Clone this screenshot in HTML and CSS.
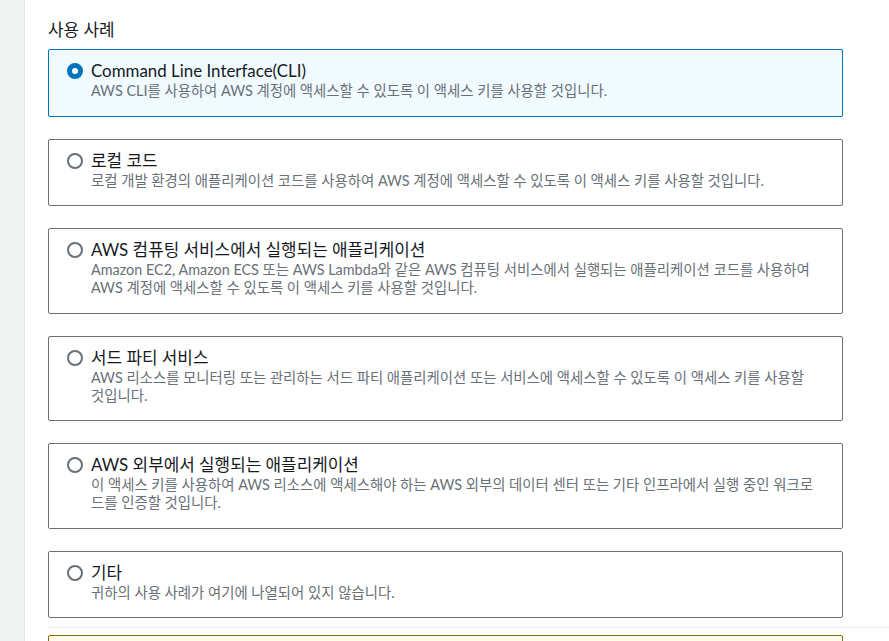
FILE: index.html
```html
<!DOCTYPE html>
<html lang="ko">
<head>
<meta charset="utf-8">
<title>사용 사례</title>
<link rel="stylesheet" href="styles.css">
</head>
<body>
<div class="layout">
  <aside class="rail"></aside>
  <main class="content">
    <h2 class="field-label">사용 사례</h2>
    <div class="tiles" role="radiogroup">
      <div class="tile is-checked" role="radio" aria-checked="true">
        <span class="radio"></span>
        <div class="tile-text">
          <div class="tile-title">Command Line Interface(CLI)</div>
          <div class="tile-desc">AWS CLI를 사용하여 AWS 계정에 액세스할 수 있도록 이 액세스 키를 사용할 것입니다.</div>
        </div>
      </div>
      <div class="tile" role="radio" aria-checked="false">
        <span class="radio"></span>
        <div class="tile-text">
          <div class="tile-title">로컬 코드</div>
          <div class="tile-desc">로컬 개발 환경의 애플리케이션 코드를 사용하여 AWS 계정에 액세스할 수 있도록 이 액세스 키를 사용할 것입니다.</div>
        </div>
      </div>
      <div class="tile" role="radio" aria-checked="false">
        <span class="radio"></span>
        <div class="tile-text">
          <div class="tile-title">AWS 컴퓨팅 서비스에서 실행되는 애플리케이션</div>
          <div class="tile-desc">Amazon EC2, Amazon ECS 또는 AWS Lambda와 같은 AWS 컴퓨팅 서비스에서 실행되는 애플리케이션 코드를 사용하여 AWS 계정에 액세스할 수 있도록 이 액세스 키를 사용할 것입니다.</div>
        </div>
      </div>
      <div class="tile" role="radio" aria-checked="false">
        <span class="radio"></span>
        <div class="tile-text">
          <div class="tile-title">서드 파티 서비스</div>
          <div class="tile-desc">AWS 리소스를 모니터링 또는 관리하는 서드 파티 애플리케이션 또는 서비스에 액세스할 수 있도록 이 액세스 키를 사용할 것입니다.</div>
        </div>
      </div>
      <div class="tile" role="radio" aria-checked="false">
        <span class="radio"></span>
        <div class="tile-text">
          <div class="tile-title">AWS 외부에서 실행되는 애플리케이션</div>
          <div class="tile-desc">이 액세스 키를 사용하여 AWS 리소스에 액세스해야 하는 AWS 외부의 데이터 센터 또는 기타 인프라에서 실행 중인 워크로드를 인증할 것입니다.</div>
        </div>
      </div>
      <div class="tile" role="radio" aria-checked="false">
        <span class="radio"></span>
        <div class="tile-text">
          <div class="tile-title">기타</div>
          <div class="tile-desc">귀하의 사용 사례가 여기에 나열되어 있지 않습니다.</div>
        </div>
      </div>
    </div>
    <hr class="divider">
    <div class="alert"></div>
  </main>
</div>
</body>
</html>
```
FILE: styles.css
```css
html, body {
  margin: 0;
  padding: 0;
  background: #ffffff;
}

body {
  font-family: Lato, "Noto Sans CJK KR", sans-serif;
  color: #16191f;
  overflow: hidden;
  height: 641px;
}

.layout {
  display: flex;
  height: 641px;
  overflow: hidden;
}

.rail {
  width: 24px;
  flex: none;
  background: #f2f3f3;
  border-right: 1px solid #e4e7e8;
}

.content {
  flex: 1;
  padding: 18px 0 0 23px;
}

.field-label {
  margin: 0 0 7px;
  font-size: 16.9px;
  line-height: 24px;
  font-weight: 400;
  color: #16191f;
}

.tiles {
  display: flex;
  flex-direction: column;
  gap: 22px;
  width: 795px;
}

.tile {
  display: flex;
  align-items: flex-start;
  gap: 8px;
  padding: 10px 23px 15.5px 18px;
  border: 1px solid #687078;
  border-radius: 2px;
  background: #ffffff;
}

.tile.is-checked {
  border-color: #0073bb;
  background: #f1faff;
}

.radio {
  flex: none;
  box-sizing: border-box;
  width: 16px;
  height: 16px;
  margin-top: 3px;
  border-radius: 50%;
  border: 2px solid #687078;
  background: #ffffff;
}

.is-checked .radio {
  border: 5px solid #0073bb;
}

.tile-text {
  flex: 1;
  min-width: 0;
}

.tile-title {
  font-size: 16.9px;
  line-height: 22px;
  color: #16191f;
}

.tile-desc {
  font-size: 14.4px;
  line-height: 18px;
  color: #687078;
}

.divider {
  margin: 9px 0 0;
  border: 0;
  border-top: 1px solid #eaeded;
  height: 0;
}

.alert {
  margin-top: 7px;
  width: 795px;
  box-sizing: border-box;
  height: 40px;
  border: 1px solid #8d6605;
  border-radius: 2px;
  background: #fffce9;
}
```
